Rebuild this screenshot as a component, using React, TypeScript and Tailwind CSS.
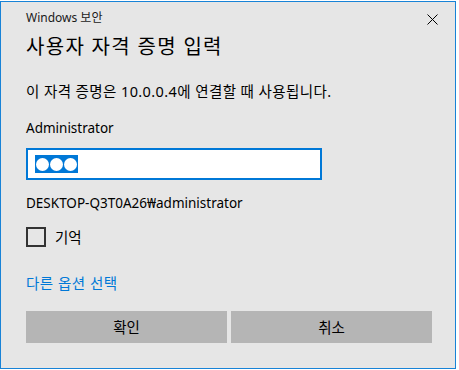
const FONT = "font-['Noto_Sans','Noto_Sans_CJK_KR',sans-serif]";

export default function App() {
  return (
    <div className={`w-[459px] h-[370px] bg-white pt-[1px] ${FONT}`}>
      <div className="relative flex flex-col w-[456px] h-[368px] bg-[#e6e6e6] border border-[#1883d7] pl-[25px] pr-[22px] text-black">
        {/* title bar */}
        <div className="mt-[8px] h-[16px] leading-[16px] text-[12px] text-[#1a1a1a]">Windows 보안</div>
        <button className="absolute right-[17px] top-[11px] w-[12px] h-[12px] flex items-center justify-center">
          <svg width="11" height="11" viewBox="0 0 11 11">
            <path d="M0.5 0.5 L10.5 10.5 M10.5 0.5 L0.5 10.5" stroke="#000" strokeWidth="1" />
          </svg>
        </button>

        <div className="mt-[9px] h-[24px] leading-[24px] text-[20px] tracking-[1.3px]">사용자 자격 증명 입력</div>
        <div className="mt-[22px] h-[20px] leading-[20px] text-[14.5px] tracking-[0.4px]">이 자격 증명은 10.0.0.4에 연결할 때 사용됩니다.</div>
        <div className="mt-[17px] h-[20px] leading-[20px] text-[13.5px]">Administrator</div>

        <div className="mt-[10px] w-[296px] h-[32px] bg-white border-2 border-[#0078d7] flex items-center pl-[7px]">
          <div className="flex items-center gap-[1px] bg-[#0078d7] h-[18px] px-[1px]">
            <span className="w-[13px] h-[13px] rounded-full bg-white" />
            <span className="w-[13px] h-[13px] rounded-full bg-white" />
            <span className="w-[13px] h-[13px] rounded-full bg-white" />
          </div>
        </div>

        <div className="mt-[13px] h-[20px] leading-[20px] text-[13.5px]">DESKTOP-Q3T0A26₩administrator</div>

        <label className="mt-[14px] h-[20px] flex items-center gap-[9px] text-[14.5px]">
          <span className="w-[20px] h-[20px] border-2 border-[#333333]" />
          <span className="leading-[20px]">기억</span>
        </label>

        <div className="mt-[26px] h-[20px] leading-[20px] text-[14.5px] text-[#0078d7] tracking-[0.5px]">다른 옵션 선택</div>

        <div className="mt-[18px] flex gap-[4px]">
          <button className="w-[201px] h-[32px] bg-[#b5b5b5] text-[14.5px] leading-[32px]">확인</button>
          <button className="w-[201px] h-[32px] bg-[#b5b5b5] text-[14.5px] leading-[32px]">취소</button>
        </div>
      </div>
    </div>
  );
}
